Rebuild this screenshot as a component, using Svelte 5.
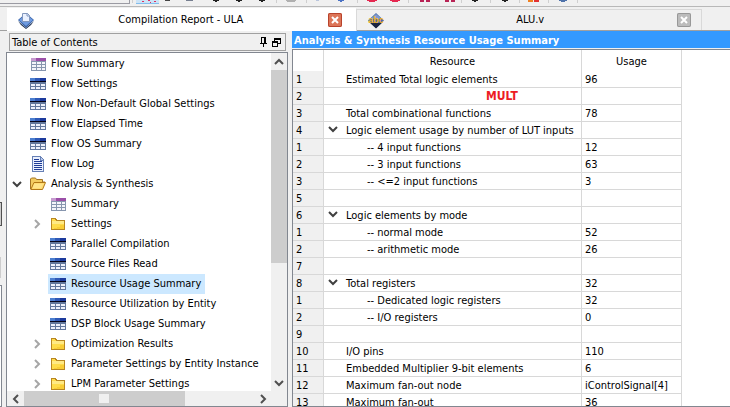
<script>
  const tree = [
    { label: 'Flow Summary', icon: 'summary' },
    { label: 'Flow Settings', icon: 'table' },
    { label: 'Flow Non-Default Global Settings', icon: 'table' },
    { label: 'Flow Elapsed Time', icon: 'table' },
    { label: 'Flow OS Summary', icon: 'table' },
    { label: 'Flow Log', icon: 'log' },
    { label: 'Analysis & Synthesis', icon: 'open', arrow: 'down' },
    { label: 'Summary', icon: 'summary', nested: true },
    { label: 'Settings', icon: 'folder', nested: true, arrow: 'right' },
    { label: 'Parallel Compilation', icon: 'table', nested: true },
    { label: 'Source Files Read', icon: 'table', nested: true },
    { label: 'Resource Usage Summary', icon: 'table', nested: true, selected: true },
    { label: 'Resource Utilization by Entity', icon: 'table', nested: true },
    { label: 'DSP Block Usage Summary', icon: 'table', nested: true },
    { label: 'Optimization Results', icon: 'folder', nested: true, arrow: 'right' },
    { label: 'Parameter Settings by Entity Instance', icon: 'folder', nested: true, arrow: 'right' },
    { label: 'LPM Parameter Settings', icon: 'folder', nested: true, arrow: 'right' }
  ];

  const rows = [
    { n: '1', name: 'Estimated Total logic elements', usage: '96' },
    { n: '2', name: '', usage: '', note: 'MULT' },
    { n: '3', name: 'Total combinational functions', usage: '78' },
    { n: '4', name: 'Logic element usage by number of LUT inputs', usage: '', open: true },
    { n: '1', name: '-- 4 input functions', usage: '12', sub: true },
    { n: '2', name: '-- 3 input functions', usage: '63', sub: true },
    { n: '3', name: '-- <=2 input functions', usage: '3', sub: true },
    { n: '5', name: '', usage: '' },
    { n: '6', name: 'Logic elements by mode', usage: '', open: true },
    { n: '1', name: '-- normal mode', usage: '52', sub: true },
    { n: '2', name: '-- arithmetic mode', usage: '26', sub: true },
    { n: '7', name: '', usage: '' },
    { n: '8', name: 'Total registers', usage: '32', open: true },
    { n: '1', name: '-- Dedicated logic registers', usage: '32', sub: true },
    { n: '2', name: '-- I/O registers', usage: '0', sub: true },
    { n: '9', name: '', usage: '' },
    { n: '10', name: 'I/O pins', usage: '110' },
    { n: '11', name: 'Embedded Multiplier 9-bit elements', usage: '6' },
    { n: '12', name: 'Maximum fan-out node', usage: 'iControlSignal[4]' },
    { n: '13', name: 'Maximum fan-out', usage: '36' }
  ];

  const separators = [132, 276, 306, 357, 408, 461, 490, 519, 548, 577];
  const arrows = [216, 239, 262, 475, 505];
</script>

{#snippet chevron(dir, color)}
  <svg class="chevron" width="10" height="10" viewBox="0 0 10 10" aria-hidden="true">
    <path
      d={dir === 'down' ? 'M1 3l4 4 4-4' : dir === 'up' ? 'M1 7l4-4 4 4' : dir === 'left' ? 'M7 1L3 5l4 4' : 'M3 1l4 4-4 4'}
      fill="none"
      stroke={color}
      stroke-width="2"
    />
  </svg>
{/snippet}

{#snippet treeIcon(kind)}
  <svg width="16" height="16" viewBox="0 0 16 16" shape-rendering="crispEdges" aria-hidden="true">
    {#if kind === 'summary'}
      <rect x="1" y="2" width="15" height="13" fill="#8796ae" />
      <rect x="1" y="2" width="15" height="3" fill="#9b4fa8" />
      <rect x="1" y="2" width="5" height="3" fill="#c79ad0" />
      <path d="M2 6h4v2H2zM7 6h4v2H7zM12 6h3v2h-3zM2 9h4v2H2zM7 9h4v2H7zM12 9h3v2h-3zM2 12h4v2H2zM7 12h4v2H7zM12 12h3v2h-3z" fill="#f4f5fa" />
    {:else if kind === 'table'}
      <rect x="0" y="2" width="16" height="12" fill="#61779d" />
      <rect x="0" y="2" width="5" height="3" fill="#4c7fd0" />
      <rect x="5" y="2" width="5" height="3" fill="#3059b6" />
      <rect x="10" y="2" width="6" height="3" fill="#1c3a9c" />
      <rect x="0" y="5" width="16" height="1" fill="#05051c" />
      <path d="M1 8h4v2H1zM6 8h4v2H6zM11 8h4v2h-4zM1 11h4v2H1zM6 11h4v2H6zM11 11h4v2h-4z" fill="#edf1fb" />
    {:else if kind === 'log'}
      <path d="M2.500.5h8l3 3v12h-11z" fill="#e9effd" stroke="#6680b5" />
      <path d="M10 1v3h3" fill="#b8c9ec" stroke="#6680b5" />
      <path d="M4 3h5v1H4zM4 5h8v1H4zM4 7h8v1H4zM4 9h8v1H4zM4 11h8v1H4zM4 13h8v1H4z" fill="#1e3c96" />
    {:else if kind === 'folder'}
      <path d="M1.500 3.500v10h13v-9h-8l-1-2h-4z" fill="#ffdc4b" stroke="#b98722" />
      <path d="M2 5h12v3H2z" fill="#ffe985" />
      <path d="M10 9h4v4H4v-1h3v-1h3z" fill="#f9cd35" />
    {:else}
      <g shape-rendering="auto">
        <path d="M.500 13V3l1-1h4l1 1.500h6V6H15" fill="#f3cc61" stroke="#a37424" />
        <path d="M.800 13.500L4 6.500h11.500l-3 7z" fill="#ffdc72" stroke="#b27818" />
        <path d="M4 8h9l-2 4H3z" fill="#ffe99b" opacity=".6" />
      </g>
    {/if}
  </svg>
{/snippet}

<div class="window">
  <div class="toolbar">
    <svg width="600" height="6" viewBox="0 0 600 6" shape-rendering="crispEdges" aria-hidden="true">
      <path d="M0 3.500h129.500V0" fill="none" stroke="#9b9ba3" />
      <rect x="136" y="0" width="23" height="4" fill="#cce4f7" />
      <path d="M136 3.500h23" stroke="#84bdeb" />
      <path d="M142 1h2v1h-2zM148 0h2v1h-2zM150 2h1v1h-1zM154 1h2v1h-2z" fill="#e03060" />
      <rect x="165" y="0" width="5" height="1" fill="#444" />
      <rect x="186" y="0" width="7" height="1" fill="#777f90" />
      {#each separators as x}
        <rect {x} y="0" width="1" height="3" fill="#cfcfcf" />
      {/each}
      {#each arrows as x}
        <path d="M{x - 3} 0h6v1h-2v1h-2v-1h-2z" fill="#222" />
      {/each}
      <path d="M286 0h10v1h-1v1h-8v-1h-1z" fill="#b0b0b0" />
      <path d="M316 0h3v1h-3z" fill="#b9c5dd" />
      <path d="M338 0h6v1h-2v1h-2v-1h-2z" fill="#4b72c4" />
      <path d="M367 0h10v1h-2v1h-6v-1h-2zM390 0h10v1h-2v1h-6v-1h-2z" fill="#e52850" />
      <path d="M420 0h4v2h-4zM426 0h4v2h-4zM445 0h4v2h-4zM451 0h4v2h-4z" fill="#b82355" />
      <rect x="528" y="0" width="5" height="2" fill="#f08020" />
      <rect x="534" y="0" width="5" height="2" fill="#e33131" />
      <path d="M559 0h8v1h-2v1h-4v-1h-2z" fill="#4f72aa" />
    </svg>
  </div>

  <div class="tabs" role="tablist">
    <div class="tab active">
      <svg width="16" height="17" viewBox="0 0 16 17" aria-hidden="true">
        <path d="M8 1l8 7-8 8-8-8z" fill="#3762a8" />
        <path d="M0 9l8 7 8-7-3 4-5 4-5-4z" fill="#172a4d" />
        <path d="M8 2l7 6-7 6-7-6z" fill="#6f9be0" />
        <path d="M4.500 1.500h5l2 2v6h-7z" fill="#eaf1ff" stroke="#8297bd" />
        <path d="M9 1v3h3" fill="none" stroke="#8297bd" />
      </svg>
      <button class="name" role="tab" aria-selected="true">Compilation Report - ULA</button>
      <button class="close red" aria-label="Close Compilation Report">
        <svg width="14" height="14" viewBox="0 0 14 14" aria-hidden="true">
          <path d="M4 4l6 6M10 4l-6 6" stroke="#fff" stroke-width="2" />
        </svg>
      </button>
    </div>
    <div class="tab">
      <svg width="16" height="17" viewBox="0 0 16 17" aria-hidden="true">
        <path d="M8 1l8 7.500L8 16 0 8.500z" fill="#4a6ba8" />
        <path d="M1 10l7 6.500 7-6.500-3 1H4z" fill="#1a2440" />
        <path d="M8 2l6 5H2z" fill="#7d9bcf" />
        <text x="8" y="11" text-anchor="middle" class="abc">abc</text>
      </svg>
      <button class="name" role="tab" aria-selected="false">ALU.v</button>
      <button class="close" aria-label="Close ALU.v">
        <svg width="14" height="14" viewBox="0 0 14 14" aria-hidden="true">
          <path d="M4 4l6 6M10 4l-6 6" stroke="#fff" stroke-width="2" />
        </svg>
      </button>
    </div>
  </div>

  <div class="body">
    <div class="edge" aria-hidden="true">
      <i class="thumb"></i>
      <i class="track"></i>
      <i class="panel"></i>
    </div>

    <aside class="dock">
      <header class="dock-title">
        <h2>Table of Contents</h2>
        <button aria-label="Pin">
          <svg width="8" height="10" viewBox="0 0 8 10" shape-rendering="crispEdges" aria-hidden="true">
            <path d="M1 0h5v6h1v1H4v3H3V7H0V6h1zM2 1v5h2V1z" fill="#000" fill-rule="evenodd" />
          </svg>
        </button>
        <button aria-label="Float">
          <svg width="9" height="9" viewBox="0 0 9 9" shape-rendering="crispEdges" aria-hidden="true">
            <path d="M2 0h7v6H6v3H0V3h2zM3 2v1h3v2h2V2zM1 5v3h4V5z" fill="#000" fill-rule="evenodd" />
          </svg>
        </button>
      </header>

      <div class="tree-box">
        <ul class="tree" role="tree">
          {#each tree as item}
            <li role="treeitem" aria-selected={!!item.selected} class:nested={item.nested}>
              <span class="arrow">
                {#if item.arrow}{@render chevron(item.arrow, item.arrow === 'down' ? '#404040' : '#a6a6a6')}{/if}
              </span>
              <span class="node" class:selected={item.selected}>
                {@render treeIcon(item.icon)}
                <span>{item.label}</span>
              </span>
            </li>
          {/each}
        </ul>
        <div class="vbar">
          <button aria-label="Scroll up">{@render chevron('up', '#505050')}</button>
          <i class="grip"></i>
          <button aria-label="Scroll down">{@render chevron('down', '#505050')}</button>
        </div>
        <div class="hbar">
          <button aria-label="Scroll left">{@render chevron('left', '#505050')}</button>
          <i class="grip"><b></b></i>
          <button aria-label="Scroll right">{@render chevron('right', '#505050')}</button>
        </div>
      </div>
    </aside>

    <main class="report">
      <h1>Analysis &amp; Synthesis Resource Usage Summary</h1>
      <div class="grid-box">
        <table>
          <colgroup><col class="c-num" /><col class="c-name" /><col class="c-use" /></colgroup>
          <thead>
            <tr><th></th><th>Resource</th><th>Usage</th></tr>
          </thead>
          <tbody>
            {#each rows as row}
              <tr>
                <th scope="row">{row.n}</th>
                <td class="res" class:sub={row.sub} class:open={row.open} class:note={row.note}>
                  {#if row.open}{@render chevron('down', '#404040')}{/if}{row.note ?? row.name}
                </td>
                <td>{row.usage}</td>
              </tr>
            {/each}
          </tbody>
        </table>
      </div>
    </main>
  </div>
</div>

<style>
  :global(body) {
    margin: 0;
  }
  .window {
    height: 100vh;
    display: flex;
    flex-direction: column;
    overflow: hidden;
    background: #f0f0f0;
    color: #000;
    font: 11px/16px 'DejaVu Sans Condensed', 'Noto Sans', sans-serif;
  }
  .window * {
    box-sizing: border-box;
  }
  button {
    margin: 0;
    padding: 0;
    border: 0;
    background: none;
    color: inherit;
    font: inherit;
    display: flex;
    align-items: center;
    justify-content: center;
  }
  svg {
    display: block;
    flex: none;
  }
  .toolbar {
    flex: none;
    height: 7px;
    overflow: hidden;
    border-bottom: 1px solid #b8b8b8;
  }
  .tabs {
    flex: none;
    display: flex;
    height: 24px;
    padding: 1px 28px 0 7px;
    border-bottom: 1px solid #a0a0a0;
  }
  .tab {
    flex: 1 1 0;
    display: flex;
    align-items: center;
    gap: 8px;
    margin-top: 1px;
    padding: 0 10px 0 11px;
    border: 1px solid #d9d9d9;
    border-width: 1px 1px 0 0;
  }
  .tab.active {
    margin: 0 0 -1px;
    padding-right: 14px;
    background: #fff;
    border-top-color: #fff;
  }
  .name {
    flex: 1;
  }
  .close {
    width: 14px;
    height: 14px;
    border-radius: 2px;
    background: #bcbcbc;
    box-shadow: inset 0 0 0 1px #989898;
  }
  .close.red {
    background: #dc7558;
    box-shadow: inset 0 0 0 1px #b8432c;
  }
  .abc {
    font: bold 9px 'Liberation Sans', sans-serif;
    fill: #f5b324;
  }
  .body {
    flex: 1;
    min-height: 0;
    display: flex;
  }
  .edge {
    flex: none;
    width: 6px;
    display: flex;
    flex-direction: column;
    padding-top: 171px;
  }
  .edge i {
    flex: none;
    width: 2px;
    background: #cdcdcd;
  }
  .edge .thumb {
    height: 24px;
    border: 1px solid #505050;
    border-left: 0;
  }
  .edge .track {
    height: 21px;
    margin: 31px 0 7px;
    width: 1px;
  }
  .edge .panel {
    flex: 1;
    background: #fff;
    border: solid #828790;
    border-width: 1px 1px 1px 0;
  }
  .dock {
    flex: none;
    width: 282px;
    display: flex;
    flex-direction: column;
  }
  .dock-title {
    display: flex;
    align-items: center;
    gap: 4px;
    height: 18px;
    margin: 2px 2px 1px 3px;
    padding: 0 4px 0 2px;
    border: 1px solid #a0a0a0;
  }
  h1,
  h2 {
    margin: 0;
    font-size: 11px;
    line-height: 18px;
  }
  h2 {
    flex: 1;
    padding-top: 2px;
    font-weight: normal;
  }
  .tree-box {
    flex: 1;
    min-height: 0;
    display: grid;
    grid-template: minmax(0, 1fr) 15px / minmax(0, 1fr) 16px;
    background: #fff;
    border: 1px solid #828790;
  }
  .tree {
    margin: 0;
    padding: 1px 0 0;
    list-style: none;
    overflow: hidden;
    white-space: nowrap;
  }
  li {
    display: flex;
    height: 20px;
  }
  li.nested {
    padding-left: 20px;
  }
  .arrow {
    flex: none;
    width: 21px;
    display: flex;
    align-items: center;
    padding-left: 5px;
  }
  .node {
    display: flex;
    align-items: center;
    gap: 5px;
    padding: 0 4px 0 2px;
  }
  .selected {
    background: #cce8ff;
  }
  .vbar {
    display: flex;
    flex-direction: column;
    background: #f0f0f0;
  }
  .vbar button {
    height: 17px;
  }
  .vbar .grip {
    height: 193px;
    margin-bottom: auto;
    background: #cdcdcd;
  }
  .hbar {
    grid-column: 1 / -1;
    display: flex;
    padding-right: 16px;
    background: #f0f0f0;
  }
  .hbar button {
    width: 17px;
  }
  .hbar .grip {
    width: 161px;
    margin-right: auto;
    padding: 3px 0 0 75px;
    background: #cdcdcd;
  }
  .hbar b {
    display: block;
    width: 10px;
    height: 9px;
    background: #f0f0f0;
  }
  .report {
    flex: 1;
    min-width: 0;
    display: flex;
    flex-direction: column;
    margin-left: 4px;
  }
  h1 {
    flex: none;
    height: 17px;
    padding-left: 2px;
    margin-bottom: 1px;
    line-height: 20px;
    background: #3399ff;
    color: #fff;
    white-space: nowrap;
  }
  .grid-box {
    flex: 1;
    min-height: 0;
    overflow: hidden;
    background: #fff;
    border: 1px solid #828790;
    border-right: 0;
  }
  table {
    width: 389px;
    table-layout: fixed;
    border-collapse: separate;
    border-spacing: 0;
  }
  .c-num {
    width: 31px;
  }
  .c-name {
    width: 258px;
  }
  .c-use {
    width: 100px;
  }
  th,
  td {
    height: 17px;
    padding: 2px 3px 0;
    border: solid #d8d8d8;
    border-width: 0 1px 1px 0;
    font-weight: normal;
    line-height: 14px;
    text-align: left;
    white-space: nowrap;
  }
  thead th {
    height: 21px;
    border-bottom: 0;
    text-align: center;
  }
  tbody th {
    background: #f0f0f0;
  }
  .res {
    padding-left: 22px;
  }
  .sub {
    padding-left: 43px;
  }
  .open {
    padding-left: 4px;
  }
  .open :global(.chevron) {
    display: inline-block;
    margin-right: 8px;
  }
  .note {
    padding-top: 0;
    padding-left: 162px;
    color: #ed1c24;
    font-size: 12px;
    font-weight: bold;
  }
</style>
